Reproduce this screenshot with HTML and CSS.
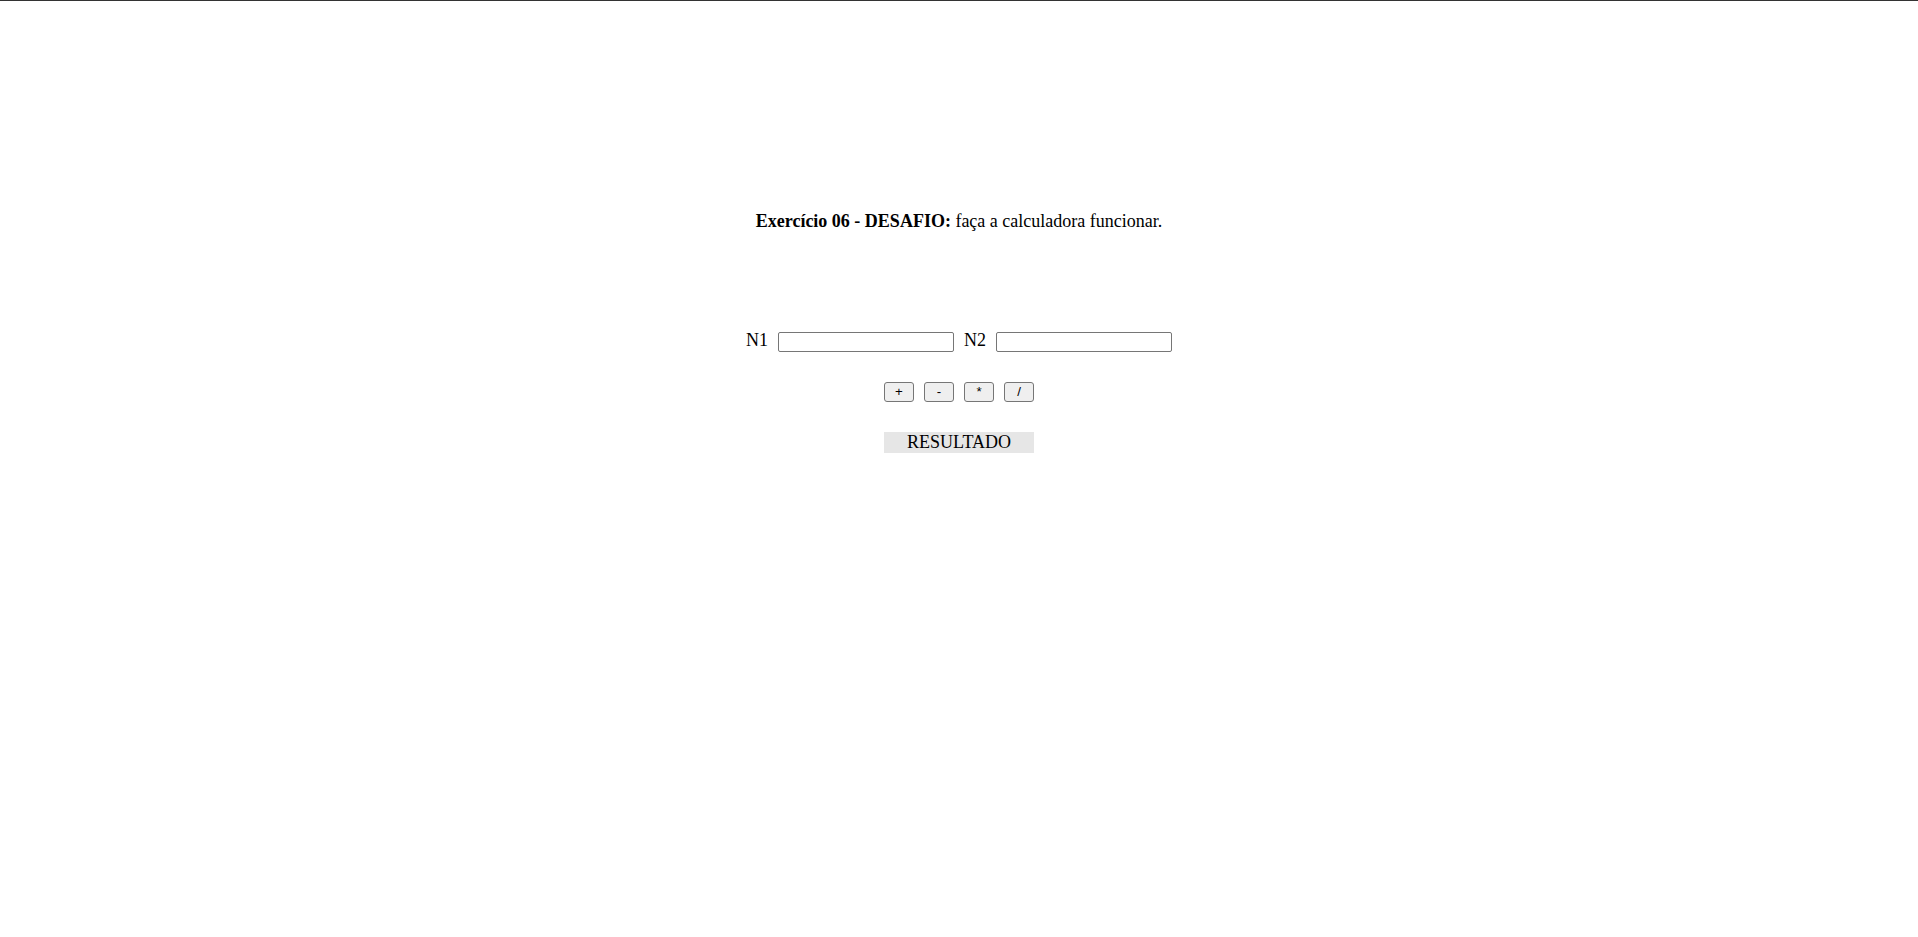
FILE: index.html
```html
<!DOCTYPE html>
<html lang="pt-BR">
<head>
<meta charset="utf-8">
<title>Exercício 06</title>
<link rel="stylesheet" href="styles.css">
</head>
<body>
<main class="page">
  <p class="title"><strong>Exercício 06 - DESAFIO:</strong> faça a calculadora funcionar.</p>
  <div class="fields">
    <span class="label label-first">N1</span>
    <input class="num" type="text">
    <span class="label label-second">N2</span>
    <input class="num" type="text">
  </div>
  <div class="ops">
    <button class="op">+</button>
    <button class="op">-</button>
    <button class="op">*</button>
    <button class="op">/</button>
  </div>
  <div class="result">RESULTADO</div>
</main>
</body>
</html>
```
FILE: styles.css
```css
html, body {
  margin: 0;
  padding: 0;
  background: #ffffff;
}
body {
  border-top: 1px solid #333333;
  font-family: "Liberation Serif", "Times New Roman", serif;
  font-size: 18px;
  color: #000000;
}
.page {
  display: flex;
  flex-direction: column;
  align-items: center;
}
.title {
  margin: 210px 0 0 0;
  line-height: 20px;
  text-align: center;
}
.fields {
  margin-top: 99px;
  display: flex;
  align-items: flex-start;
}
.label {
  line-height: 20px;
}
.label-first {
  margin-right: 10px;
}
.label-second {
  margin-left: 10px;
  margin-right: 10px;
}
.num {
  box-sizing: border-box;
  width: 176px;
  height: 20px;
  margin: 2px 0 0 0;
  padding: 1px 2px;
  border: 1px solid #767676;
  border-radius: 2px;
  background: #ffffff;
  font-family: "Liberation Sans", Arial, sans-serif;
  font-size: 13.33px;
}
.ops {
  margin-top: 30px;
  display: flex;
  gap: 10px;
}
.op {
  box-sizing: border-box;
  width: 30px;
  height: 20px;
  margin: 0;
  padding: 0;
  border: 1px solid #767676;
  border-radius: 3px;
  background: #efefef;
  color: #000000;
  font-family: "Liberation Sans", Arial, sans-serif;
  font-size: 13.33px;
  line-height: 18px;
}
.result {
  margin-top: 30px;
  width: 150px;
  height: 21px;
  line-height: 21px;
  background: #e6e6e6;
  text-align: center;
}
```
